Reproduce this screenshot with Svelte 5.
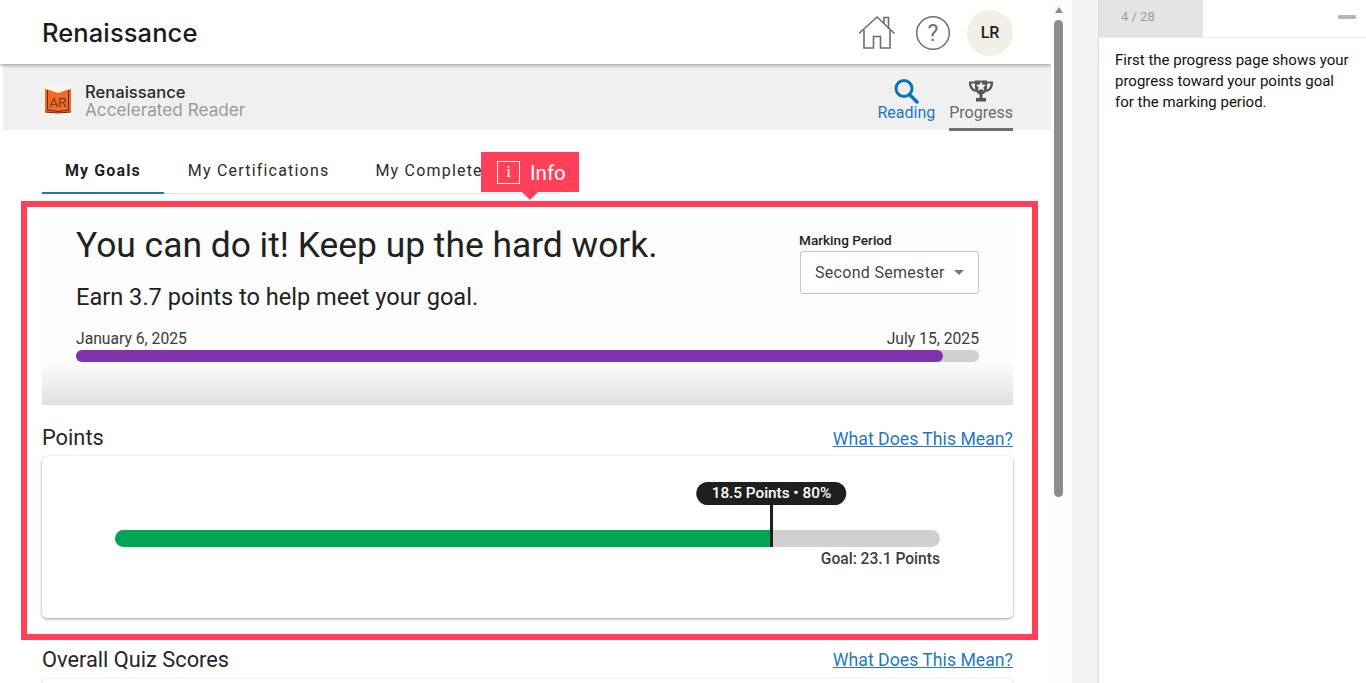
<script lang="ts">
  const tabs = ["My Goals", "My Certifications", "My Complete"];
  const pointsPct = 79.6;
  const datePct = 96;
</script>

<div class="shell">
  <main class="main">
    <header class="topbar">
      <div class="logo">Renaissance</div>
      <div class="top-actions">
        <svg class="home" width="38" height="36" viewBox="0 0 38 36" fill="none" stroke="#726c67" stroke-width="1.600">
          <path d="M1 18.500 19 2l17.500 16.500" />
          <path d="M26 8V2.500h4.500v11.500" />
          <path d="M6 15v18h9.500V21.500h7V33H32V15" />
        </svg>
        <svg class="help" width="36" height="36" viewBox="0 0 36 36" fill="none">
          <circle cx="18" cy="18" r="16.300" stroke="#726c67" stroke-width="1.500" />
          <text x="18" y="25.500" text-anchor="middle" class="help-mark">?</text>
        </svg>
        <div class="avatar">LR</div>
      </div>
    </header>

    <nav class="subnav">
      <div class="brand">
        <svg width="32" height="32" viewBox="0 0 32 32">
          <rect width="32" height="32" rx="3" fill="#fbf3e8" />
          <path d="M3 4l4 1 9 3 9-3 4-1v23l-13 1-13-1z" fill="#f26b24" />
          <path d="M5.500 5v20l10.500 1.500L26.500 25V5M3 27l13 1 13-1" stroke="#5b2a12" stroke-width="1" fill="none" />
          <text x="16" y="22" text-anchor="middle" class="ar-mark">AR</text>
        </svg>
        <div class="brand-text">
          <span class="brand-top">Renaissance</span>
          <span class="brand-sub">Accelerated Reader</span>
        </div>
      </div>
      <div class="apps">
        <div class="app reading">
          <svg width="26" height="26" viewBox="0 0 26 26" fill="none" stroke="#0b72b9">
            <circle cx="11" cy="10.500" r="8" stroke-width="3" />
            <path d="M16.500 16.500 24 24" stroke-width="3.400" stroke-linecap="round" />
          </svg>
          <span>Reading</span>
        </div>
        <div class="app progress">
          <svg width="26" height="26" viewBox="0 0 26 26">
            <path d="M7 2.500h12v7c0 3.500-2.200 6-4.500 6.800V20H18v3.500H8V20h3.500v-3.700C9.200 15.500 7 13 7 9.500z" fill="#555" />
            <path d="M7.500 4.500H2c0 4.500 2 7.500 6 8.500M18.500 4.500H24c0 4.500-2 7.500-6 8.500" fill="none" stroke="#555" stroke-width="2.200" />
            <path d="m13 3.500 1.500 3.100 3.400.4-2.500 2.300.7 3.400-3.100-1.700-3.100 1.700.7-3.400L8.100 7l3.400-.4z" fill="#f0f0f0" />
          </svg>
          <span>Progress</span>
        </div>
      </div>
    </nav>

    <div class="content">
      <div class="tabs">
        {#each tabs as tab, i}
          <div class="tab" class:active={i === 0}>{tab}</div>
        {/each}
      </div>

      <section class="hero">
        <div class="hero-top">
          <div>
            <h1>You can do it! Keep up the hard work.</h1>
            <p class="earn">Earn 3.7 points to help meet your goal.</p>
          </div>
          <div class="period">
            <div class="period-label">Marking Period</div>
            <div class="select">
              <span>Second Semester</span>
              <i class="caret"></i>
            </div>
          </div>
        </div>
        <div class="dates">
          <span>January 6, 2025</span>
          <span>July 15, 2025</span>
        </div>
        <div class="date-bar">
          <div class="date-fill" style="width: {datePct}%"></div>
        </div>
      </section>

      <div class="section-head points-head">
        <h2>Points</h2>
        <a href="#points">What Does This Mean?</a>
      </div>
      <section class="card points-card">
        <div class="meter">
          <div class="meter-fill" style="width: {pointsPct}%">
            <div class="marker">
              <div class="bubble">18.5 Points • 80%</div>
            </div>
          </div>
        </div>
        <div class="goal">Goal: 23.1 Points</div>
      </section>

      <div class="section-head quiz-head">
        <h2>Overall Quiz Scores</h2>
        <a href="#quiz">What Does This Mean?</a>
      </div>
      <section class="card quiz-card"></section>
    </div>

    <div class="highlight"></div>
    <div class="info-tag">
      <span class="info-icon">i</span>
      <span>Info</span>
    </div>
  </main>

  <div class="scrollbar">
    <i class="arrow"></i>
    <div class="thumb"></div>
  </div>
  <div class="gutter"></div>

  <aside class="panel">
    <div class="panel-head">
      <div class="counter">4 / 28</div>
      <i class="minimize"></i>
    </div>
    <p class="panel-text">First the progress page shows your progress toward your points goal for the marking period.</p>
  </aside>
</div>

<style>
  :global(body) {
    margin: 0;
    background: #fff;
    overflow: hidden;
    font-family: Roboto, "Liberation Sans", sans-serif;
  }

  .shell {
    display: flex;
    height: 683px;
    overflow: hidden;
  }

  .main {
    position: relative;
    width: 1051px;
    flex: none;
    overflow: hidden;
  }

  /* top bar */
  .topbar {
    height: 64px;
    box-sizing: border-box;
    padding: 0 38px 0 42px;
    display: flex;
    align-items: center;
    justify-content: space-between;
    position: relative;
    z-index: 1;
    box-shadow: 0 2px 3px rgba(0, 0, 0, 0.28);
    background: #fff;
  }

  .logo {
    font-family: Inter, sans-serif;
    font-size: 25.500px;
    font-weight: 500;
    letter-spacing: 0.1px;
    color: #1b1b1b;
    margin-top: 1px;
  }

  .top-actions {
    display: flex;
    align-items: center;
    margin-top: 1px;
  }

  .home { margin-right: 19px; }
  .help { margin-right: 16px; }

  .help-mark {
    font-family: Roboto, sans-serif;
    font-size: 23px;
    fill: #726c67;
  }

  .avatar {
    width: 46px;
    height: 46px;
    border-radius: 50%;
    background: #f1efe6;
    color: #222;
    font-size: 16px;
    font-weight: 500;
    display: flex;
    align-items: center;
    justify-content: center;
  }

  .subnav {
    height: 66px;
    margin-left: 3px;
    padding: 0 38px 0 39px;
    background: #f0f0f0;
    display: flex;
    align-items: flex-end;
    justify-content: space-between;
  }

  .brand {
    display: flex;
    align-items: center;
    gap: 12px;
    align-self: center;
    margin-top: 8px;
  }

  .ar-mark {
    font-family: Roboto, sans-serif;
    font-size: 13.500px;
    font-weight: 300;
    fill: #3d1a08;
  }

  .brand-text {
    display: flex;
    flex-direction: column;
    font-family: Inter, sans-serif;
    line-height: 18px;
    margin-left: -1px;
  }

  .brand-top {
    font-size: 16.600px;
    font-weight: 500;
    color: #2a2a2a;
  }

  .brand-sub {
    font-size: 17.200px;
    color: #9a9a9a;
  }

  .apps {
    display: flex;
    gap: 14px;
  }

  .app {
    display: flex;
    flex-direction: column;
    align-items: center;
    font-size: 16px;
    height: 52px;
    box-sizing: border-box;
    line-height: 19px;
  }

  .app svg { margin-bottom: -1px; }

  .reading { color: #1a78c2; }

  .progress {
    color: #6b6b6b;
    border-bottom: 3px solid #6f6f6f;
    height: 53px;
    margin-bottom: -2px;
  }

  /* tabs */
  .content {
    padding: 0 38px 0 42px;
  }

  .tabs {
    display: flex;
    width: 519px;
    height: 44px;
    margin-top: 20px;
    box-sizing: border-box;
    border-bottom: 1px solid #e3e3e3;
    white-space: nowrap;
  }

  .tab {
    padding: 0 23px;
    font-size: 16px;
    line-height: 42px;
    letter-spacing: 1.200px;
    color: #2b2b2b;
    height: 44px;
    box-sizing: border-box;
  }

  .tab.active {
    font-weight: 700;
    letter-spacing: 1.100px;
    color: #1f1f1f;
    border-bottom: 2px solid #1f73b7;
    margin-right: 1px;
  }

  /* hero */
  .hero {
    margin-top: 26px;
    height: 185px;
    box-sizing: border-box;
    padding: 4px 34px 0;
    background: linear-gradient(#fcfcfc 0, #fcfcfc 142px, #e0e0e0 100%);
  }

  .hero-top {
    display: flex;
    justify-content: space-between;
    height: 104px;
  }

  h1 {
    margin: 0;
    font-size: 35.400px;
    font-weight: 400;
    line-height: 42px;
    color: #212121;
  }

  .earn {
    margin: 17px 0 0;
    font-size: 23.600px;
    line-height: 28px;
    color: #212121;
  }

  .period {
    width: 180px;
    padding-top: 7px;
  }

  .period-label {
    font-size: 13.600px;
    font-weight: 500;
    line-height: 18px;
    color: #212121;
  }

  .select {
    height: 43px;
    margin: 2px 0 0 1px;
    box-sizing: border-box;
    border: 1.500px solid #c6c6c6;
    border-radius: 3px;
    background: #fff;
    padding: 0 14px;
    display: flex;
    align-items: center;
    gap: 9px;
    font-size: 16px;
    letter-spacing: 0.300px;
    color: #444;
    white-space: nowrap;
  }

  .caret {
    width: 0;
    height: 0;
    border: 5px solid transparent;
    border-top-color: #777;
    border-bottom: 0;
  }

  .dates {
    display: flex;
    justify-content: space-between;
    font-size: 15.700px;
    line-height: 19px;
    margin-top: 1px;
    color: #3a3a3a;
  }

  .date-bar {
    height: 12px;
    margin-top: 2px;
    border-radius: 6px;
    background: #d0d0d0;
  }

  .date-fill {
    height: 100%;
    border-radius: 6px;
    background: #7f33ad;
  }

  /* sections */
  .section-head {
    display: flex;
    justify-content: space-between;
    align-items: baseline;
  }

  .points-head { margin-top: 20px; height: 31px; }
  .quiz-head { margin-top: 29px; height: 32px; align-items: flex-start; }
  .quiz-head a { line-height: 26px; }

  h2 {
    margin: 0;
    font-size: 21.800px;
    font-weight: 400;
    line-height: 26px;
    color: #262626;
  }

  .section-head a {
    font-size: 17.700px;
    color: #1f78c1;
  }

  .card {
    background: #fff;
    border-radius: 5px;
    box-shadow: 0 1px 3px rgba(0, 0, 0, 0.4);
    box-sizing: border-box;
  }

  .points-card {
    height: 162px;
    padding: 74px 73px 0;
  }

  .quiz-card { height: 60px; }

  .meter {
    height: 17px;
    border-radius: 9px;
    background: #d0d0d0;
  }

  .meter-fill {
    position: relative;
    height: 100%;
    background: #02a552;
    border-radius: 9px 0 0 9px;
  }

  .marker {
    position: absolute;
    right: -1px;
    bottom: 0;
    width: 2.500px;
    height: 42px;
    background: #1f1f1f;
  }

  .bubble {
    position: absolute;
    bottom: 100%;
    left: 50%;
    transform: translateX(-50%);
    background: #1f1f1f;
    color: #fff;
    font-size: 15.300px;
    font-weight: 500;
    line-height: 23px;
    padding: 0 15px;
    border-radius: 12px;
    white-space: nowrap;
  }

  .goal {
    text-align: right;
    margin-top: 3px;
    font-size: 15.600px;
    font-weight: 500;
    line-height: 18px;
    color: #3c3c3c;
  }

  /* overlays */
  .highlight {
    position: absolute;
    left: 21px;
    top: 201px;
    width: 1017px;
    height: 439px;
    box-sizing: border-box;
    border: 6px solid #ff4058;
    pointer-events: none;
  }

  .info-tag {
    position: absolute;
    left: 481px;
    top: 152px;
    width: 98px;
    height: 40px;
    box-sizing: border-box;
    padding: 2px 0 0 16px;
    background: #ff4058;
    color: #fff;
    font-size: 20.500px;
    display: flex;
    align-items: center;
    gap: 10px;
  }

  .info-tag::after {
    content: "";
    position: absolute;
    left: 50%;
    top: 100%;
    margin-left: -8px;
    border: 8px solid transparent;
    border-top-color: #ff4058;
    border-bottom: 0;
  }

  .info-icon {
    width: 23px;
    height: 23px;
    margin-top: -2px;
    box-sizing: border-box;
    border: 1px solid #fff;
    font-family: "Liberation Serif", serif;
    font-size: 17px;
    line-height: 20px;
    text-align: center;
  }

  /* scrollbar */
  .scrollbar {
    width: 21px;
    flex: none;
    padding: 7px 0 0 3px;
    box-sizing: border-box;
    background: #fdfdfd;
  }

  .arrow {
    display: block;
    width: 0;
    margin-left: 0.500px;
    border: 4px solid transparent;
    border-bottom: 6px solid #8a8a8a;
    border-top: 0;
  }

  .thumb {
    width: 9px;
    height: 477px;
    margin-top: 7px;
    border-radius: 5px;
    background: #8c8c8c;
  }

  .gutter {
    width: 26px;
    flex: none;
    background: #f1f3f2;
  }

  /* side panel */
  .panel {
    flex: 1;
    border-left: 1px solid #dcdcdc;
    background: #fff;
  }

  .panel-head {
    height: 38px;
    box-sizing: border-box;
    border-bottom: 1px solid #ededed;
    display: flex;
    align-items: flex-start;
    justify-content: space-between;
    padding-right: 10px;
  }

  .counter {
    width: 104px;
    height: 37px;
    background: #e3e3e3;
    color: #9c9c9c;
    font-size: 13px;
    line-height: 34px;
    padding-left: 22px;
    box-sizing: border-box;
  }

  .minimize {
    width: 18px;
    height: 4px;
    margin-top: 15px;
    border-radius: 1px;
    background: #b5b5b5;
  }

  .panel-text {
    margin: 12px 0 0;
    padding: 0 16px;
    font-size: 15px;
    line-height: 21px;
    color: #111;
  }
</style>
